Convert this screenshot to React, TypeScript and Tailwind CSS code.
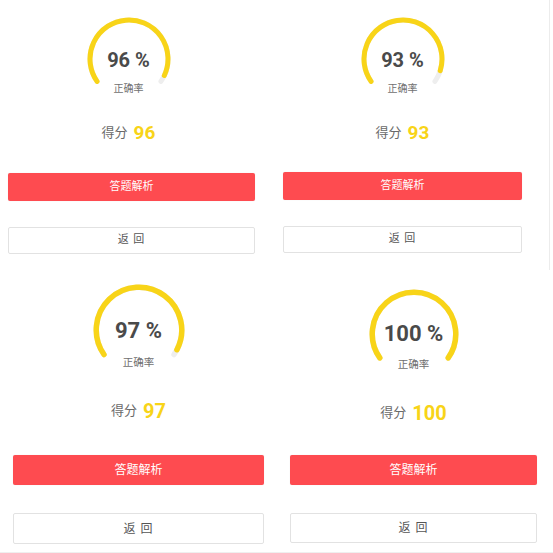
import React from 'react';

/**
 * Quiz result cards - four snapshots of the "答题结果" screen laid out in a
 * 2x2 grid. Each card: accuracy gauge, score line, two action buttons.
 */

type Card = {
  pct: number;
  score: number;
  size: number;
  stroke: number;
  wrap: string;
  col: string;
  gauge: string;
  pctText: string;
  label: string;
  scoreRow: string;
  scoreVal: string;
  btnText: string;
  red: string;
  white: string;
};

const cards: Card[] = [
  {
    pct: 96, score: 96, size: 84, stroke: 5,
    wrap: 'w-[276px] h-[276px] pl-[8px] pt-[17px]',
    col: 'w-[247px]',
    gauge: 'w-[84px] h-[84px] mr-[6px] pt-[31px]',
    pctText: 'text-[20px] leading-[24px]',
    label: 'mt-[10px] text-[10px] leading-[14px]',
    scoreRow: 'mt-[20px] h-[24px] mr-[6px]',
    scoreVal: 'text-[19px]',
    btnText: 'text-[11px]',
    red: 'mt-[28px] h-[28px]',
    white: 'mt-[26px] h-[27px]',
  },
  {
    pct: 93, score: 93, size: 84, stroke: 5,
    wrap: 'w-[273px] h-[276px] pl-[7px] pt-[17px]',
    col: 'w-[239px]',
    gauge: 'w-[84px] h-[84px] pt-[31px]',
    pctText: 'text-[20px] leading-[24px]',
    label: 'mt-[10px] text-[10px] leading-[14px]',
    scoreRow: 'mt-[20px] h-[24px]',
    scoreVal: 'text-[19px]',
    btnText: 'text-[11px]',
    red: 'mt-[27px] h-[28px]',
    white: 'mt-[26px] h-[27px]',
  },
  {
    pct: 97, score: 97, size: 92, stroke: 5.5,
    wrap: 'w-[276px] h-[276px] pl-[13px] pt-[8px]',
    col: 'w-[251px]',
    gauge: 'w-[92px] h-[92px] pt-[34px]',
    pctText: 'text-[22px] leading-[26px]',
    label: 'mt-[12px] text-[10.5px] leading-[14px]',
    scoreRow: 'mt-[22px] h-[26px]',
    scoreVal: 'text-[20px]',
    btnText: 'text-[12px]',
    red: 'mt-[31px] h-[30px]',
    white: 'mt-[28px] h-[31px]',
  },
  {
    pct: 100, score: 100, size: 90, stroke: 5.5,
    wrap: 'w-[277px] h-[276px] pl-[14px] pt-[13px]',
    col: 'w-[247px]',
    gauge: 'w-[90px] h-[90px] pt-[32px]',
    pctText: 'text-[22px] leading-[26px]',
    label: 'mt-[11px] text-[10.5px] leading-[14px]',
    scoreRow: 'mt-[21px] h-[26px]',
    scoreVal: 'text-[20px]',
    btnText: 'text-[12px]',
    red: 'mt-[29px] h-[30px]',
    white: 'mt-[28px] h-[30px]',
  },
];

const START = 215;
const SWEEP = 250;

const Gauge: React.FC<{ pct: number; size: number; stroke: number }> = ({ pct, size, stroke }) => {
  const c = size / 2;
  const r = c - stroke / 2 - 0.5;
  const pt = (deg: number) => {
    const a = (deg * Math.PI) / 180;
    return [c + r * Math.cos(a), c - r * Math.sin(a)];
  };
  const arc = (from: number, to: number) => {
    const [x1, y1] = pt(from);
    const [x2, y2] = pt(to);
    const large = from - to > 180 ? 1 : 0;
    return `M ${x1} ${y1} A ${r} ${r} 0 ${large} 1 ${x2} ${y2}`;
  };
  return (
    <svg className="absolute inset-0" width={size} height={size} viewBox={`0 0 ${size} ${size}`}>
      <path d={arc(START, START - SWEEP)} fill="none" stroke="#eeeeee" strokeWidth={stroke} strokeLinecap="round" />
      <path
        d={arc(START, START - (SWEEP * pct) / 100)}
        fill="none"
        stroke="#f8d418"
        strokeWidth={stroke}
        strokeLinecap="round"
      />
    </svg>
  );
};

const ResultCard: React.FC<{ card: Card }> = ({ card }) => (
  <div className={`${card.wrap} flex flex-col`}>
    <div className={`${card.col} flex flex-col items-center`}>
      <div className={`${card.gauge} relative flex flex-col items-center`}>
        <Gauge pct={card.pct} size={card.size} stroke={card.stroke} />
        <span className={`${card.pctText} relative font-bold text-[#4a4a4a]`}>{card.pct} %</span>
        <span className={`${card.label} relative text-[#707070]`}>正确率</span>
      </div>

      <div className={`${card.scoreRow} flex items-center gap-[6px]`}>
        <span className="text-[13px] text-[#6a6a6a]">得分</span>
        <span className={`${card.scoreVal} font-bold text-[#f8d418]`}>{card.score}</span>
      </div>

      <button
        className={`${card.red} ${card.btnText} w-full rounded-[2px] bg-[#fe4b50] font-normal text-white shadow-[0_0_1px_rgba(0,0,0,0.15)]`}
      >
        答题解析
      </button>
      <button
        className={`${card.white} ${card.btnText} w-full rounded-[2px] border border-[#e2e2e2] bg-white font-normal tracking-[1px] text-[#555555]`}
      >
        返 回
      </button>
    </div>
  </div>
);

const App: React.FC = () => (
  <div className="w-[553px] h-[553px] bg-white overflow-hidden font-['Roboto','Noto_Sans_CJK_SC',sans-serif]">
    <div className="flex h-[276px]">
      <ResultCard card={cards[0]} />
      <div className="flex">
        <ResultCard card={cards[1]} />
        <div className="w-px h-[270px] bg-[#ececec]" />
      </div>
    </div>
    <div className="flex h-[277px] border-b border-[#efefef]">
      <ResultCard card={cards[2]} />
      <ResultCard card={cards[3]} />
    </div>
  </div>
);

export default App;
